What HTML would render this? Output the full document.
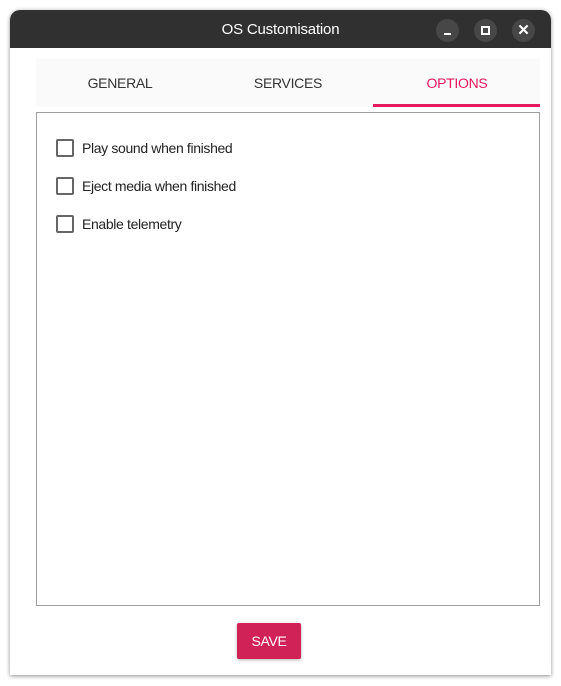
<!DOCTYPE html>
<html><head><style>
body{margin:0;width:561px;height:686px;background:#fff;font-family:"Liberation Sans",sans-serif;position:relative;overflow:hidden}
.win{position:absolute;left:10px;top:10px;width:541px;height:665px;background:#fff;border-radius:10px 10px 0 0;box-shadow:0 1px 4px rgba(0,0,0,.45);overflow:hidden}
.tb{position:absolute;left:0;top:0;width:541px;height:38px;background:#303030;color:#fff;font-size:15px;text-align:center;line-height:40px;letter-spacing:-0.2px}
.cb{position:absolute;top:9px;width:23px;height:23px;border-radius:50%;background:#474747;letter-spacing:0}
.tabs{position:absolute;left:26px;top:49px;width:504px;height:48px;background:#fafafa}
.tab{position:absolute;top:0;width:168px;text-align:center;line-height:48px;font-size:14px;color:#333;letter-spacing:-0.3px}
.ul{position:absolute;left:337px;top:45px;width:167px;height:3px;background:#e6195f}
.box{position:absolute;left:26px;top:102px;width:502px;height:492px;border:1px solid #9e9e9e}
.row{position:absolute;left:19px;font-size:14px;color:#222;line-height:18px;letter-spacing:-0.35px}
.row i{display:inline-block;width:14px;height:14px;border:2px solid #666;border-radius:2px;vertical-align:top;margin-right:8px;margin-top:0}
.save{position:absolute;left:227px;top:613px;width:64px;height:36px;background:#d02257;border-radius:2px;color:#fff;font-size:14px;text-align:center;line-height:36px;box-shadow:0 1px 3px rgba(0,0,0,.3);letter-spacing:-0.3px}
</style></head><body>
<div class="win">
<div class="tb">OS Customisation
<div class="cb" style="left:426px"><div style="position:absolute;left:8px;top:14px;width:7px;height:2px;background:#fff"></div></div>
<div class="cb" style="left:464px"><div style="position:absolute;left:7px;top:7px;width:5px;height:5px;border:2px solid #fff"></div></div>
<div class="cb" style="left:502px;font-size:15px;line-height:23px;font-weight:bold">✕</div>
</div>
<div class="tabs">
<div class="tab" style="left:0">GENERAL</div>
<div class="tab" style="left:168px">SERVICES</div>
<div class="tab" style="left:337px;color:#e6195f">OPTIONS</div>
<div class="ul"></div>
</div>
<div class="box">
<div class="row" style="top:26px"><i></i>Play sound when finished</div>
<div class="row" style="top:64px"><i></i>Eject media when finished</div>
<div class="row" style="top:102px"><i></i>Enable telemetry</div>
</div>
<div class="save">SAVE</div>
</div>
</body></html>
